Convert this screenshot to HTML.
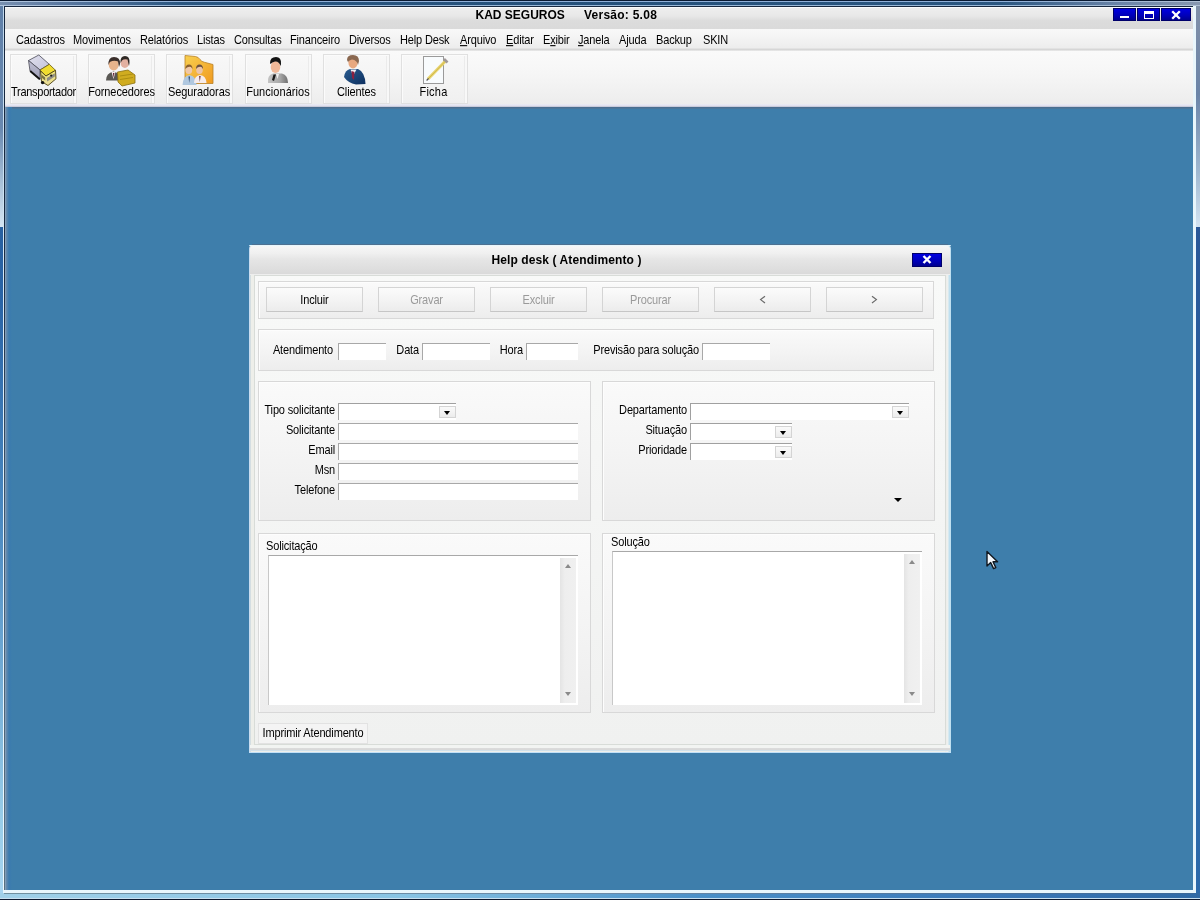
<!DOCTYPE html>
<html><head><meta charset="utf-8">
<style>
*{margin:0;padding:0;box-sizing:border-box}
html,body{width:1200px;height:900px;overflow:hidden;background:#2b62a0}
body{position:relative;font-family:"Liberation Sans",sans-serif;font-size:11px;color:#000;letter-spacing:-0.15px}
.a{position:absolute}
.t{position:absolute;white-space:pre;line-height:13px}
/* main frame */
#frame{left:0;top:0;width:1200px;height:900px;background:#a9b9d2}
#mdi{left:6px;top:107px;width:1187px;height:783px;background:#3e7eab}
.menu span{position:absolute;top:34px;white-space:pre;line-height:13px;transform:scaleY(1.1);transform-origin:50% 10px}
.tb{position:absolute;top:54px;width:67px;height:50px;border:1px solid #e0e0e0;box-shadow:inset 1px 1px 0 #fbfbfb,inset -2px 0 0 #f8f8f8,inset -3px 0 0 #ebebeb;background:linear-gradient(#f8f8f8,#f0f0f0)}
.tb .lbl{position:absolute;left:-2px;right:-2px;top:31px;text-align:center;white-space:pre;line-height:13px;letter-spacing:-0.3px;transform:scaleY(1.1);transform-origin:50% 10px}
.wbtn{position:absolute;top:8px;height:13px;background:linear-gradient(#0000e0,#0000b8 60%,#000090);border:1px solid #00006a}
.btn{position:absolute;top:287px;width:97px;height:25px;border:1px solid #d4d4d4;border-bottom-color:#c6c6c6;background:linear-gradient(#fbfbfb,#f4f4f4 50%,#ececec);text-align:center;line-height:25px;color:#9a9a9a}
.grp{position:absolute;border:1px solid #d8d8d8;box-shadow:inset 1px 1px 0 #fdfdfd;background:linear-gradient(#fafafa,#f4f4f4 50%,#ededed)}
.inp{position:absolute;height:17px;background:#fff;border-top:1px solid #a8a8a8;border-left:1px solid #a8a8a8}
.cmb{position:absolute;height:17px;background:#fff;border-top:1px solid #a0a0a0;border-left:1px solid #a0a0a0}
.cmb i{position:absolute;right:0;top:2px;width:17px;height:12px;background:linear-gradient(#fafafa,#ececec);border:1px solid #d4d4d4}
.cmb i:after{content:"";position:absolute;left:3.5px;top:4px;border-left:3.5px solid transparent;border-right:3.5px solid transparent;border-top:4px solid #000}
.bt{display:inline-block;transform:scaleY(1.13);transform-origin:50% 75%}
.lab{position:absolute;white-space:pre;line-height:13px;text-align:right;transform:scaleY(1.1);transform-origin:50% 10px}
.memo{position:absolute;background:#fff;border-top:1px solid #a8a8a8;border-left:1px solid #c8c8c8}
.sb{position:absolute;top:2px;right:2px;bottom:2px;width:16px;background:linear-gradient(90deg,#e4e4e4,#eeeeee 30%,#f0f0f0)}
.up{position:absolute;left:4.5px;top:6px;border-left:3.5px solid transparent;border-right:3.5px solid transparent;border-bottom:4px solid #8a8a8a}
.dn{position:absolute;left:4.5px;bottom:7px;border-left:3.5px solid transparent;border-right:3.5px solid transparent;border-top:4px solid #8a8a8a}
</style></head>
<body>
<div id="root" style="position:absolute;left:0;top:0;width:1200px;height:900px;will-change:transform">
<div id="frame" class="a"></div>
<!-- outer frame details -->
<div class="a" style="left:0;top:0;width:1200px;height:1px;background:#0a1a32"></div>
<div class="a" style="left:0;top:1px;width:1200px;height:5px;background:linear-gradient(90deg,#7890b0 0,#5a78a0 60px,#2a5680 180px,#24507a 600px,#2a5680 1000px,#6a84a8 1120px,#8898b0 1200px)"></div>
<div class="a" style="left:0;top:1px;width:1200px;height:1px;background:linear-gradient(90deg,#b0c4dc,#90b0d8 200px,#90b0d8 1000px,#b0c0d4)"></div>
<div class="a" style="left:0;top:5px;width:1200px;height:1px;background:linear-gradient(90deg,#b0c4dc,#98b8d8 200px,#98b8d8 1000px,#b0c0d4)"></div>
<div class="a" style="left:0;top:6px;width:3px;height:221px;background:linear-gradient(#6080a8,#6888b0 55%,#a8c0d8 80%,#d4e4f2)"></div>
<div class="a" style="left:1196px;top:6px;width:4px;height:221px;background:linear-gradient(#8090a8,#6a84a8 40%,#a0b8d0 75%,#d4e4f2)"></div>
<div class="a" style="left:0;top:227px;width:3px;height:673px;background:linear-gradient(#2860a0,#2a64a6 11%,#4a88c0 43%,#98cce8 88%,#a8d4f0)"></div>
<div class="a" style="left:1196px;top:227px;width:4px;height:673px;background:linear-gradient(#2a5898,#2a64a6 50%,#2c6aaa)"></div>
<div class="a" style="left:3px;top:6px;width:1px;height:887px;background:linear-gradient(#c0d8ec,#e0f0fa 50%,#eef8ff)"></div>
<div class="a" style="left:4px;top:6px;width:1px;height:884px;background:linear-gradient(#14243c,#1a2c44 30%,#405870 60%,#587080)"></div>
<div class="a" style="left:5px;top:107px;width:1px;height:783px;background:#7f9cb8"></div>
<div class="a" style="left:4px;top:6px;width:1190px;height:1px;background:#182840"></div>
<div class="a" style="left:1193px;top:6px;width:3px;height:887px;background:#e8f6fc"></div>
<div class="a" style="left:3px;top:890px;width:1193px;height:3px;background:#e8f6fc"></div>
<div class="a" style="left:0;top:893px;width:1200px;height:5px;background:linear-gradient(90deg,#a0d0e8,#88c4e4 400px,#4a90c8 700px,#3a78b8 1000px,#2f6aa6)"></div>
<div class="a" style="left:4px;top:893px;width:1190px;height:1px;background:linear-gradient(90deg,#7090a0,#6a8aa8 600px,#3a6898)"></div>
<div class="a" style="left:0;top:898px;width:1200px;height:1px;background:#c8e0f0"></div>
<div class="a" style="left:0;top:899px;width:1200px;height:1px;background:#0d1a30"></div>

<!-- title bar -->
<div class="a" style="left:5px;top:7px;width:1188px;height:22px;background:linear-gradient(#fafcfc 0,#fafcfc 1px,#eeeeee 1px,#e8e8e8 40%,#dcdcdc 62%,#dadada)"></div>
<div class="t" style="left:475.5px;top:9px;font-weight:bold;font-size:12px;letter-spacing:0">KAD SEGUROS</div>
<div class="t" style="left:584px;top:9px;font-weight:bold;font-size:12px;letter-spacing:0.25px">Versão: 5.08</div>
<div class="wbtn" style="left:1113px;width:23px"><div class="a" style="left:6px;top:7px;width:9px;height:2px;background:#fff"></div></div>
<div class="wbtn" style="left:1137px;width:23px"><div class="a" style="left:6px;top:2px;width:10px;height:8px;border:1.5px solid #fff;border-top-width:3px"></div></div>
<div class="wbtn" style="left:1161px;width:30px"><svg class="a" style="left:9px;top:1px" width="10" height="10" viewBox="0 0 10 10"><path d="M1.2 1.2L8.8 8.8M8.8 1.2L1.2 8.8" stroke="#fff" stroke-width="2.3"/></svg></div>

<!-- menu bar -->
<div class="a" style="left:5px;top:29px;width:1188px;height:20px;background:linear-gradient(#f8f8f8,#f4f4f4 40%,#ececec)"></div>
<div class="a" style="left:5px;top:48px;width:1188px;height:3px;background:linear-gradient(#e8e8e8,#d6d6d6 50%,#ececec)"></div>
<div class="menu">
<span style="left:16px">Cadastros</span>
<span style="left:73px">Movimentos</span>
<span style="left:140px">Relatórios</span>
<span style="left:197px">Listas</span>
<span style="left:234px">Consultas</span>
<span style="left:290px">Financeiro</span>
<span style="left:349px">Diversos</span>
<span style="left:400px">Help Desk</span>
<span style="left:460px"><u>A</u>rquivo</span>
<span style="left:506px"><u>E</u>ditar</span>
<span style="left:543px">E<u>x</u>ibir</span>
<span style="left:578px"><u>J</u>anela</span>
<span style="left:619px">Ajuda</span>
<span style="left:656px">Backup</span>
<span style="left:703px">SKIN</span>
</div>

<!-- toolbar -->
<div class="a" style="left:5px;top:51px;width:1188px;height:56px;background:linear-gradient(#fafafa,#f6f6f6 40%,#ececec)"></div>
<div class="a" style="left:5px;top:104px;width:1188px;height:3px;background:linear-gradient(#ececf4,#e0e0ee 60%,#b8bccc)"></div>
<div class="tb" style="left:10px"><div class="lbl">Transportador</div></div>
<div class="tb" style="left:88px"><div class="lbl" style="letter-spacing:-0.1px">Fornecedores</div></div>
<div class="tb" style="left:166px"><div class="lbl" style="letter-spacing:-0.07px;left:-3px">Seguradoras</div></div>
<div class="tb" style="left:245px"><div class="lbl" style="letter-spacing:0.06px;left:-3px">Funcionários</div></div>
<div class="tb" style="left:323px"><div class="lbl" style="letter-spacing:-0.1px">Clientes</div></div>
<div class="tb" style="left:401px"><div class="lbl" style="letter-spacing:0.2px;left:-4px">Ficha</div></div>


<!-- toolbar icons -->
<svg class="a" style="left:24px;top:52px" width="40" height="36" viewBox="24 52 40 36">
 <defs><linearGradient id="tbox" x1="0" y1="0" x2="1" y2="1"><stop offset="0" stop-color="#e0e0ee"/><stop offset="1" stop-color="#c4c4da"/></linearGradient>
 <linearGradient id="tside" x1="0" y1="0" x2="0" y2="1"><stop offset="0" stop-color="#c0c0d4"/><stop offset="1" stop-color="#9c9cb4"/></linearGradient>
 <linearGradient id="tcab" x1="0" y1="0" x2="0" y2="1"><stop offset="0" stop-color="#f0e470"/><stop offset="1" stop-color="#e8dc9c"/></linearGradient></defs>
 <path d="M28.5 60.5L38.8 55L49.3 64.3L40 70Z" fill="url(#tbox)" stroke="#5a5a66" stroke-width="0.9"/>
 <path d="M28.5 60.5L40 70L40 79.5L30 71Z" fill="url(#tside)" stroke="#4a4a56" stroke-width="0.8"/>
 <path d="M30.2 71L39.8 79.2" stroke="#111" stroke-width="2"/>
 <path d="M40 70L49.3 64.3L55.5 70.3L46 76Z" fill="#f0dc30" stroke="#6a5a10" stroke-width="0.8"/>
 <path d="M40.5 71L46 76L55.5 70.3L56 78.8L48 85.5L41.5 81.5Z" fill="url(#tcab)" stroke="#4a3e10" stroke-width="0.9"/>
 <path d="M46.8 78L54.8 73.2L54.8 76.6L47.2 81.4Z" fill="#8e8c84"/>
 <path d="M41.5 74.5L45.2 77.5L45.2 80.5L41.5 77.5Z" fill="#7a7240"/>
 <circle cx="42.6" cy="82.6" r="1.7" fill="#111"/><circle cx="51.2" cy="75.6" r="1.1" fill="#1a1a1a"/>
</svg>
<svg class="a" style="left:102px;top:54px" width="36" height="34" viewBox="102 54 36 34">
 <path d="M106 80.5Q106 73 113.5 71.5Q121 73 121 80.5Z" fill="#5a5854"/>
 <path d="M111.5 72L113.5 79L115.5 72Z" fill="#f4eaea"/><path d="M113 73L113.6 78L114.4 73Z" fill="#5a1828"/>
 <ellipse cx="113.7" cy="64.5" rx="5" ry="6" fill="#e8b48c"/>
 <path d="M108.5 65Q108 57 114 57Q120.5 57 120 64L119 67L118 61.5Q114 60 109.8 62Z" fill="#3a2e2a"/>
 <ellipse cx="124.8" cy="63" rx="4.2" ry="5" fill="#e2b0a0"/>
 <path d="M120.5 63Q120 56 125 56Q130 56 129.5 63L129 66L127.5 59.5Q124 58.5 122 60.5Z" fill="#2e2824"/>
 <path d="M117.5 72L128 70L135 75L135 83L122 86L118 82Z" fill="#d0ac20" stroke="#8a7010" stroke-width="0.8"/>
 <path d="M120 76L133 74M120 79.5L133 77.5" stroke="#a88a10" stroke-width="0.9"/>
</svg>
<svg class="a" style="left:180px;top:52px" width="36" height="36" viewBox="180 52 36 36">
 <defs><linearGradient id="sflag" x1="0" y1="0" x2="1" y2="1"><stop offset="0" stop-color="#f8d050"/><stop offset="1" stop-color="#f09a20"/></linearGradient></defs>
 <path d="M185 55.5L195.5 56.5Q198.5 57 200 59.5Q201.5 61.8 204.5 62.3L213 64.5L213 83.5L190 83.5L185 83Z" fill="url(#sflag)" stroke="#b8822a" stroke-width="0.8"/>
 <path d="M182.5 85Q183 76 189.5 75Q196 76 196.5 85Z" fill="#b0c8e0"/>
 <path d="M188.5 76.5L189.2 83L190 76.5Z" fill="#2a4a70"/>
 <ellipse cx="188.8" cy="70" rx="3.4" ry="4" fill="#f0c8a8"/>
 <path d="M185.3 69Q185.5 64.5 189 64.5Q192.5 64.5 192.5 69L191 67Q189 66.5 187 67.5Z" fill="#8a6030"/>
 <path d="M194 83Q194.5 75.5 200 75Q206 75.5 206.5 83Z" fill="#f6ecec"/>
 <path d="M199.2 76L199.8 82L200.6 76Z" fill="#5a2028"/>
 <ellipse cx="199.5" cy="70" rx="3.3" ry="4" fill="#ecc4a8"/>
 <path d="M196 69Q196 64.5 199.5 64.5Q203 64.5 203 69L201.5 67Q199.5 66.5 197.5 67.5Z" fill="#6a5040"/>
</svg>
<svg class="a" style="left:262px;top:54px" width="32" height="32" viewBox="262 54 32 32">
 <defs><linearGradient id="fbody" x1="0" y1="0" x2="1" y2="0"><stop offset="0" stop-color="#c4c4c4"/><stop offset="0.6" stop-color="#a8a8a8"/><stop offset="1" stop-color="#707070"/></linearGradient></defs>
 <path d="M268 83Q267 75 273 73.5L282 73.5Q288 75 288 83Z" fill="url(#fbody)"/>
 <path d="M273.5 74.5L272 80L274 81L276 74.5Z" fill="#1a1a1a"/>
 <path d="M276 74L277.5 79L279 74Z" fill="#f0f0f0"/>
 <ellipse cx="275.5" cy="67" rx="4.8" ry="6" fill="#f0b898"/>
 <path d="M270 63Q270 57 276 57Q281.5 57 281 64L280.5 66Q279 61 275 61.5Q272 62 270.5 64Z" fill="#141414"/>
</svg>
<svg class="a" style="left:340px;top:52px" width="32" height="36" viewBox="340 52 32 36">
 <defs><linearGradient id="cbody" x1="0" y1="0" x2="1" y2="1"><stop offset="0" stop-color="#2a5c90"/><stop offset="1" stop-color="#0e3060"/></linearGradient></defs>
 <path d="M344 77Q345 70 350 69L358 69Q365 72 365.5 84L356 84.5Q348 83 344 77Z" fill="url(#cbody)"/>
 <path d="M350.5 69.5L353 76L356.5 69.5Z" fill="#f4f0f4"/>
 <path d="M351.5 71L352 78L354 80L354.5 72Z" fill="#8a2040"/>
 <ellipse cx="353" cy="62.5" rx="4.6" ry="6" fill="#e8a880"/>
 <path d="M347 60Q347 55 353 55Q359 55 359 61L358 65Q357 60 352 59.5Q349 60 348 62Z" fill="#8a6850"/>
</svg>
<svg class="a" style="left:420px;top:52px" width="32" height="36" viewBox="420 52 32 36">
 <rect x="423.5" y="56.5" width="20" height="27" fill="#f8fbfd" stroke="#9a9a9a" stroke-width="1"/>
 <path d="M428 79L446 60.5" stroke="#e8d470" stroke-width="3.2"/>
 <path d="M428 79L446 60.5" stroke="#c8b040" stroke-width="0.8"/>
 <path d="M444 59L447.5 62.5" stroke="#a09898" stroke-width="2.6"/>
 <path d="M426.6 80.5L428.5 78.5" stroke="#555" stroke-width="1.2"/>
</svg>

<!-- MDI -->
<div id="mdi" class="a"></div>
<div class="a" style="left:6px;top:107px;width:1187px;height:2px;background:linear-gradient(#4a6a8c,#4a7a9e)"></div>
<div class="a" style="left:6px;top:107px;width:6px;height:783px;background:linear-gradient(90deg,#6a8cac,#3a7ab0 50%,#3e7eab)"></div>

<!-- DIALOG -->
<div class="a" id="dlg" style="left:249px;top:245px;width:702px;height:508px;background:linear-gradient(90deg,#c8dcf0 0,#c8dcf0 1px,#d4dee2 1px,#d4dee2 2px,#eeefea 2px,#eeefea calc(100% - 6px),#ece9e6 calc(100% - 6px),#eef2f0 calc(100% - 3px),#c0e0f0 calc(100% - 2px));border-radius:4px 4px 0 0;border-bottom:1px solid #c0e0f8"></div>
<div class="a" style="left:252px;top:244px;width:696px;height:1px;background:#4e7090"></div>
<div class="a" style="left:250px;top:246px;width:700px;height:29px;border-radius:3px 3px 0 0;background:linear-gradient(#f6f6f6,#f0f0f0 25%,#e6e6e6 45%,#e0e0e0 70%,#dadada 96%,#eeeeee 96%)"></div>
<div class="a" style="left:249px;top:245px;width:702px;height:1px;border-radius:4px 4px 0 0;background:#e6f6fc"></div>
<div class="t" style="left:491.5px;top:254px;font-weight:bold;font-size:12px;letter-spacing:0.1px">Help desk ( Atendimento )</div>
<div class="wbtn" style="left:912px;top:253px;width:30px;height:14px"><svg class="a" style="left:9px;top:0px" width="10" height="11" viewBox="0 0 10 10"><path d="M1.5 1.5L8.5 8.5M8.5 1.5L1.5 8.5" stroke="#fff" stroke-width="2.4"/></svg></div>
<div class="a" style="left:254px;top:275px;width:692px;height:470px;border:1px solid #d8dcd8;background:linear-gradient(#f8f9f8,#f0f1f0)"></div>
<div class="a" style="left:250px;top:748px;width:700px;height:3px;background:linear-gradient(#dcdcdc,#d8d8d8 66%,#d0e0ea 66%)"></div>
<div class="a" style="left:250px;top:745px;width:700px;height:3px;background:#f2f4f2"></div>
<div class="grp" style="left:258px;top:281px;width:676px;height:38px"></div>
<div class="btn" style="left:266px;color:#000"><span class="bt">Incluir</span></div>
<div class="btn" style="left:378px"><span class="bt">Gravar</span></div>
<div class="btn" style="left:490px"><span class="bt">Excluir</span></div>
<div class="btn" style="left:602px"><span class="bt">Procurar</span></div>
<div class="btn" style="left:714px"><svg class="a" style="left:0;top:0" width="97" height="25" viewBox="715 288 97 25"><path d="M765 296.2L760.6 299.6L765 303" fill="none" stroke="#6a6a6a" stroke-width="1.2"/></svg></div>
<div class="btn" style="left:826px"><svg class="a" style="left:0;top:0" width="97" height="25" viewBox="827 288 97 25"><path d="M872 296.2L876.4 299.6L872 303" fill="none" stroke="#6a6a6a" stroke-width="1.2"/></svg></div>

<div class="grp" style="left:258px;top:329px;width:676px;height:42px"></div>
<div class="lab" style="right:867px;top:344px">Atendimento</div>
<div class="inp" style="left:338px;top:343px;width:48px"></div>
<div class="lab" style="right:781px;top:344px">Data</div>
<div class="inp" style="left:422px;top:343px;width:68px"></div>
<div class="lab" style="right:677px;top:344px">Hora</div>
<div class="inp" style="left:526px;top:343px;width:52px"></div>
<div class="lab" style="right:501px;top:344px">Previsão para solução</div>
<div class="inp" style="left:702px;top:343px;width:68px"></div>

<div class="grp" style="left:258px;top:381px;width:333px;height:140px"></div>
<div class="lab" style="right:865px;top:404px">Tipo solicitante</div>
<div class="cmb" style="left:338px;top:403px;width:118px"><i></i></div>
<div class="lab" style="right:865px;top:424px">Solicitante</div>
<div class="inp" style="left:338px;top:423px;width:240px"></div>
<div class="lab" style="right:865px;top:444px">Email</div>
<div class="inp" style="left:338px;top:443px;width:240px"></div>
<div class="lab" style="right:865px;top:464px">Msn</div>
<div class="inp" style="left:338px;top:463px;width:240px"></div>
<div class="lab" style="right:865px;top:484px">Telefone</div>
<div class="inp" style="left:338px;top:483px;width:240px"></div>

<div class="grp" style="left:602px;top:381px;width:333px;height:140px"></div>
<div class="lab" style="right:513px;top:404px">Departamento</div>
<div class="cmb" style="left:690px;top:403px;width:219px"><i></i></div>
<div class="lab" style="right:513px;top:424px">Situação</div>
<div class="cmb" style="left:690px;top:423px;width:102px"><i></i></div>
<div class="lab" style="right:513px;top:444px">Prioridade</div>
<div class="cmb" style="left:690px;top:443px;width:102px"><i></i></div>
<div class="a" style="left:894px;top:498px;border-left:4px solid transparent;border-right:4px solid transparent;border-top:4px solid #000"></div>

<div class="grp" style="left:258px;top:533px;width:333px;height:180px"></div>
<div class="lab" style="left:266px;top:540px">Solicitação</div>
<div class="memo" style="left:268px;top:555px;width:310px;height:150px"><div class="sb"><i class="up"></i><i class="dn"></i></div></div>

<div class="grp" style="left:602px;top:533px;width:333px;height:180px"></div>
<div class="lab" style="left:611px;top:536px">Solução</div>
<div class="memo" style="left:612px;top:551px;width:310px;height:154px"><div class="sb"><i class="up"></i><i class="dn"></i></div></div>

<div class="btn" style="left:258px;top:723px;width:110px;height:21px;line-height:19px;color:#000;border-color:#e2e2e2;background:#f4f4f4"><span class="bt">Imprimir Atendimento</span></div>

<!-- cursor -->
<svg class="a" style="left:980px;top:545px" width="25" height="30" viewBox="980 545 25 30"><path d="M987 551.5L987 566L990.7 562.6L993.6 568.6L995.8 567.6L993 561.8L997.6 561.8Z" fill="#f4f8fc" stroke="#101820" stroke-width="1.4" stroke-linejoin="round"/></svg>
</div>
</body></html>
